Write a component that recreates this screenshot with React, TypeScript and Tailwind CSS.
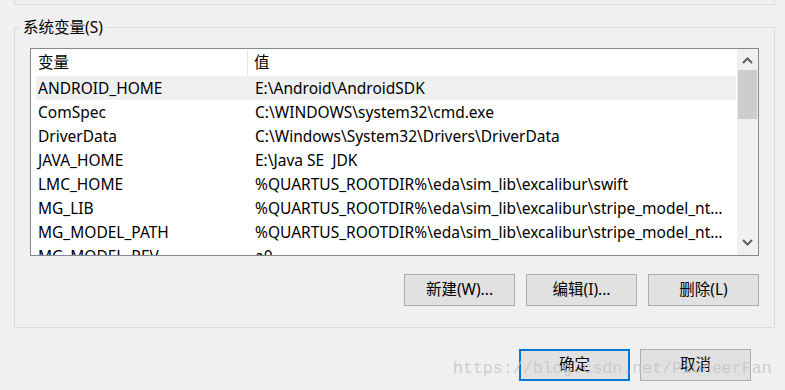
import React from 'react';

const rows: [string, string][] = [
  ['ANDROID_HOME', 'E:\\Android\\AndroidSDK'],
  ['ComSpec', 'C:\\WINDOWS\\system32\\cmd.exe'],
  ['DriverData', 'C:\\Windows\\System32\\Drivers\\DriverData'],
  ['JAVA_HOME', 'E:\\Java SE  JDK'],
  ['LMC_HOME', '%QUARTUS_ROOTDIR%\\eda\\sim_lib\\excalibur\\swift'],
  ['MG_LIB', '%QUARTUS_ROOTDIR%\\eda\\sim_lib\\excalibur\\stripe_model_nt\\lib'],
  ['MG_MODEL_PATH', '%QUARTUS_ROOTDIR%\\eda\\sim_lib\\excalibur\\stripe_model_nt\\models'],
  ['MG_MODEL_REV', 'a0'],
];

function Btn({ label, primary }: { label: string; primary?: boolean }) {
  return (
    <button
      className={
        primary
          ? 'w-[111px] h-[32px] bg-[#e1e1e1] border-2 border-[#0078d7] text-[15.5px] text-black'
          : 'w-[111px] h-[32px] bg-[#e1e1e1] border border-[#adadad] text-[15.5px] text-black'
      }
    >
      {label}
    </button>
  );
}

export default function App() {
  return (
    <div
      className="relative w-[785px] h-[390px] bg-[#f0f0f0] overflow-hidden text-black"
      style={{ fontFamily: '"Noto Sans", "Noto Sans CJK SC", sans-serif' }}
    >
      {/* tail of the user variables group */}
      <div className="ml-[14px] w-[761px] h-[5px] border-x border-b border-[#dcdcdc]" />

      {/* system variables group */}
      <div className="relative ml-[14px] mt-[22px] w-[761px] h-[301px] border border-[#dcdcdc]">
        <span className="absolute left-[5px] -top-[12px] px-[3px] bg-[#f0f0f0] text-[15.5px] leading-[22px]">
          系统变量(S)
        </span>

        {/* list view */}
        <div className="ml-[15px] mt-[20px] w-[729px] h-[208px] border border-[#828790] bg-white flex overflow-hidden">
          <div className="flex-1 flex flex-col overflow-hidden">
            <div className="flex h-[27px] shrink-0 text-[15.5px] leading-[27px]">
              <div className="w-[212px] ml-[5px] pl-[2px] border-r border-[#e5e5e5] my-[1px] leading-[25px]">变量</div>
              <div className="pl-[6px]">值</div>
            </div>
            {rows.map(([k, v], i) => (
              <div
                key={k}
                className={
                  i === 0
                    ? 'flex h-[24px] shrink-0 ml-[5px] w-[700px] bg-[#f0f0f0] text-[15.5px] leading-[24px]'
                    : 'flex h-[24px] shrink-0 ml-[5px] w-[700px] text-[15.5px] leading-[24px]'
                }
              >
                <div className="w-[212px] pl-[2px] whitespace-nowrap">{k}</div>
                <div className="w-[478px] pl-[7px] whitespace-pre overflow-hidden text-ellipsis">{v}</div>
              </div>
            ))}
          </div>

          {/* scrollbar */}
          <div className="w-[21px] shrink-0 bg-[#f0f0f0] flex flex-col">
            <div className="h-[21px] flex items-center justify-center pt-[2px]">
              <svg width="11" height="7" viewBox="0 0 11 7">
                <path d="M1 6 L5.5 1.5 L10 6" fill="none" stroke="#606060" strokeWidth="2" />
              </svg>
            </div>
            <div className="mx-[1px] h-[49px] bg-[#cdcdcd]" />
            <div className="flex-1" />
            <div className="h-[21px] flex items-center justify-center pb-[4px]">
              <svg width="11" height="7" viewBox="0 0 11 7">
                <path d="M1 1 L5.5 5.5 L10 1" fill="none" stroke="#606060" strokeWidth="2" />
              </svg>
            </div>
          </div>
        </div>

        <div className="flex justify-end gap-[11px] mt-[18px] mr-[15px]">
          <Btn label="新建(W)..." />
          <Btn label="编辑(I)..." />
          <Btn label="删除(L)" />
        </div>
      </div>

      <div className="flex justify-end gap-[10px] mt-[21px] mr-[34px]">
        <Btn label="确定" primary />
        <Btn label="取消" />
      </div>

      {/* watermark */}
      <div
        className="absolute left-[453px] top-[359px] text-[16.6px] leading-[20px] text-[#c4c4c4]/80 pointer-events-none"
        style={{ fontFamily: '"Liberation Mono", monospace' }}
      >
        https://blog.csdn.net/PioneerFan
      </div>
    </div>
  );
}
